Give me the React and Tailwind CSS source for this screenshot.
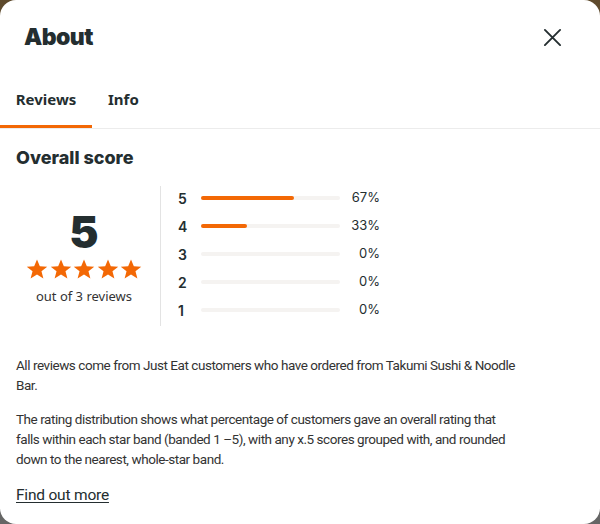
import React, { useState } from "react";

const distribution = [
  { stars: 5, pct: 67 },
  { stars: 4, pct: 33 },
  { stars: 3, pct: 0 },
  { stars: 2, pct: 0 },
  { stars: 1, pct: 0 },
];

const Star = () => (
  <svg width="22" height="21" viewBox="0 0 24 23" className="fill-[#f36805]">
    <polygon points="12,0.5 15.1,8 23.2,8.4 16.9,13.5 19,21.4 12,16.9 5,21.4 7.1,13.5 0.8,8.4 8.9,8" />
  </svg>
);

const App = () => {
  const [tab, setTab] = useState("reviews");

  return (
    <div className="w-[600px] h-[524px] bg-gradient-to-b from-[#5e4a2c] via-[#5a5650] to-[#666666] overflow-hidden">
      <div className="w-full h-full bg-white rounded-2xl text-[#242e30] font-['Noto_Sans',sans-serif]">
        {/* Header */}
        <div className="flex items-center justify-between pl-6 pr-[38px] pt-[20px] h-[72px] pb-[18px]">
          <h1 className="text-[23px] font-black font-['Inter',sans-serif] tracking-tight">About</h1>
          <button className="text-[#242e30]">
            <svg width="19" height="19" viewBox="0 0 20 20" stroke="currentColor" strokeWidth="2" strokeLinecap="round">
              <path d="M2 2 L18 18 M18 2 L2 18" />
            </svg>
          </button>
        </div>

        {/* Tabs */}
        <div className="flex border-b border-[#ececec] h-[57px] items-stretch">
          <button
            onClick={() => setTab("reviews")}
            className={`w-[92px] text-[15px] font-bold border-b-[3px] pt-[2px] ${tab === "reviews" ? "border-[#f36805]" : "border-transparent"}`}
          >
            Reviews
          </button>
          <button
            onClick={() => setTab("info")}
            className={`px-4 text-[15px] font-bold border-b-[3px] pt-[2px] ${tab === "info" ? "border-[#f36805]" : "border-transparent"}`}
          >
            Info
          </button>
        </div>

        <div className="px-4">
          <h2 className="text-[18px] font-extrabold font-['Inter',sans-serif] mt-[17px] leading-6">Overall score</h2>

          {/* Score summary */}
          <div className="flex mt-[16px]">
            <div className="w-[136px] mr-[8px] flex flex-col items-center pt-[22px]">
              <div className="text-[44px] leading-[48px] font-black font-['Inter',sans-serif]">5</div>
              <div className="flex gap-[1.5px] mt-[3px]">
                <Star />
                <Star />
                <Star />
                <Star />
                <Star />
              </div>
              <div className="text-[13px] mt-[7px] text-[#333]">out of 3 reviews</div>
            </div>
            <div className="border-l border-[#e3e3e3] h-[140px] pl-[17px] flex flex-col">
              <div className="-mt-[2px]">
                {distribution.map((d) => (
                  <div key={d.stars} className="flex items-center h-[28px] font-['Inter',sans-serif]">
                    <span className="w-[23px] text-[14px] font-semibold">{d.stars}</span>
                    <div className="w-[139px] h-[4px] rounded-full bg-[#f5f3f1]">
                      <div className="h-full rounded-full bg-[#f36805]" style={{ width: `${d.pct}%` }} />
                    </div>
                    <span className="w-[40px] text-right text-[13px]">{d.pct}%</span>
                  </div>
                ))}
              </div>
            </div>
          </div>

          {/* Info text */}
          <div className="max-w-[505px] text-[13.5px] tracking-[-0.45px] leading-5 text-[#333] mt-[29px] font-['Roboto',sans-serif]">
            <p>All reviews come from Just Eat customers who have ordered from Takumi Sushi &amp; Noodle Bar.</p>
            <p className="mt-[14px]">
              The rating distribution shows what percentage of customers gave an overall rating that falls within each star band (banded 1 –5), with any x.5 scores grouped with, and rounded down to the nearest, whole-star band.
            </p>
            <a href="#" className="inline-block mt-[16px] text-[15.5px] tracking-[-0.2px] underline underline-offset-2 text-[#242e30]">
              Find out more
            </a>
          </div>
        </div>
      </div>
    </div>
  );
};

export default App;
